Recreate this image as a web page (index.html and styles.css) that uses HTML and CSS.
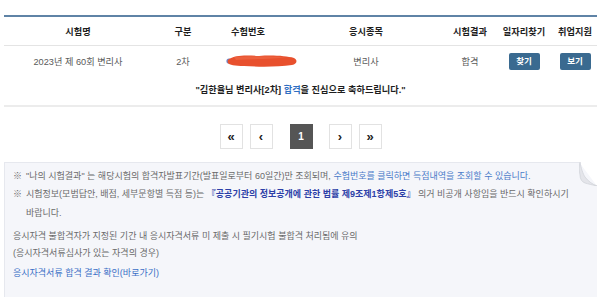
FILE: index.html
```html
<!DOCTYPE html>
<html lang="ko">
<head>
<meta charset="utf-8">
<title>나의 시험결과</title>
<link rel="stylesheet" href="styles.css">
</head>
<body>
<div class="wrap">
  <div class="tbl">
    <div class="row head">
      <div>시험명</div><div>구분</div><div>수험번호</div><div>응시종목</div><div>시험결과</div><div>일자리찾기</div><div class="last">취업지원</div>
    </div>
    <div class="row data">
      <div>2023년 제 60회 변리사</div>
      <div>2차</div>
      <div class="num">
        <svg class="redact" width="72" height="16" viewBox="0 0 72 16">
          <circle cx="3" cy="8" r="2.6" fill="#6d86c9"/>
          <path d="M3 6 C9 2 20 2 33 3 C47 2 60 3 68 5 C72 7 71 11 66 12 C52 14 33 14 18 13 C9 13 3 12 2 10 C1 8 2 7 3 6 Z" fill="#e8502d"/>
          <path d="M8 4 C20 3 40 3 60 4 C50 6 30 6 10 7 Z" fill="#ee6a48" opacity=".6"/>
        </svg>
      </div>
      <div>변리사</div>
      <div>합격</div>
      <div><span class="btn">찾기</span></div>
      <div class="last"><span class="btn">보기</span></div>
    </div>
  </div>
  <p class="msg">"김한율님 변리사[2차] <span class="pass">합격</span>을 진심으로 축하드립니다."</p>
  <nav class="pager">
    <span class="pg">&laquo;</span>
    <span class="pg">&lsaquo;</span>
    <span class="pg on">1</span>
    <span class="pg">&rsaquo;</span>
    <span class="pg">&raquo;</span>
  </nav>
  <div class="info">
    <svg class="curl" width="18" height="24" viewBox="0 0 18 24">
      <path d="M0 0 H18 V24 Z" fill="#ffffff"/>
      <path d="M1 0 C2 6 4 12 6 15 C9 19 13 22 18 24 C14 23 9 22 6 21 C3 20 1 17 1 13 C0 9 0 4 1 0 Z" fill="#e4e5ea" stroke="#cfd1d7" stroke-width=".7"/>
    </svg>
    <ul class="notes">
      <li><span class="mark">※</span><span class="txt">"나의 시험결과" 는 해당시험의 합격자발표기간(발표일로부터 60일간)만 조회되며, <span class="lnk">수험번호를 클릭하면 득점내역을 조회할 수 있습니다.</span></span></li>
      <li class="two"><span class="mark">※</span><span class="txt">시험정보(모범답안, 배점, 세부문항별 득점 등)는 <strong class="law">『공공기관의 정보공개에 관한 법률 제9조제1항제5호』</strong> 의거 비공개 사항임을 반드시 확인하시기<br>바랍니다.</span></li>
    </ul>
    <p class="warn">응시자격 불합격자가 지정된 기간 내 응시자격서류 미 제출 시 필기시험 불합격 처리됨에 유의<br>(응시자격서류심사가 있는 자격의 경우)</p>
    <p class="go"><a href="#">응시자격서류 합격 결과 확인(바로가기)</a></p>
  </div>
</div>
</body>
</html>
```
FILE: styles.css
```css
* { box-sizing: border-box; }
body {
  margin: 0;
  background: #fff;
  font-family: "Liberation Sans", "Noto Sans CJK KR", sans-serif;
  overflow: hidden;
}
.wrap { padding: 15px 0 0 4px; }

.tbl { border-top: 2px solid #5f83a6; }
.row {
  display: grid;
  grid-template-columns: 148px 62px 68px 168px 40px 68px 39px;
  align-items: center;
  text-align: center;
  font-size: 9.2px;
}
.row .last { padding-right: 5px; }
.head {
  height: 29px;
  border-bottom: 1px solid #e4e4e4;
  font-weight: bold;
  color: #1e1e1e;
}
.data { height: 30px; color: #5a5a5a; }
.num { text-align: left; padding-left: 12px; height: 16px; }
.redact { display: block; overflow: visible; }
.btn {
  display: inline-block;
  width: 31px;
  height: 17px;
  line-height: 17px;
  background: #3a6a90;
  color: #fff;
  font-weight: bold;
  border-radius: 2px;
  font-size: 8.5px;
}

.msg {
  margin: 0;
  height: 31px;
  line-height: 29px;
  text-align: center;
  font-size: 9.2px;
  font-weight: bold;
  color: #1e1e1e;
  border-bottom: 2px solid #ececec;
}
.pass { color: #2f6fc2; }

.pager {
  display: flex;
  justify-content: center;
  margin-top: 17px;
  height: 25px;
}
.pg {
  width: 23px;
  height: 25px;
  border: 1px solid #e2e2e2;
  background: #fff;
  display: flex;
  align-items: center;
  justify-content: center;
  font-size: 13px;
  font-weight: bold;
  color: #222;
  margin-left: 7px;
}
.pg:first-child { margin-left: 0; }
.pg.on {
  background: #555;
  border-color: #555;
  color: #fff;
  font-size: 10px;
  margin-left: 17px;
  margin-right: 9px;
}
.pg.on + .pg { margin-left: 7px; }

.info {
  position: relative;
  margin-top: 13px;
  height: 140px;
  background: #f5f6fa;
  border-top: 1px solid #e6e8ee;
  border-left: 1px solid #e6e8ee;
  padding: 4px 20px 0 8px;
  font-size: 9px;
  line-height: 18px;
  color: #6a6a6a;
}
.curl { position: absolute; top: -1px; right: 0; }
.notes { list-style: none; margin: 0; padding: 0; }
.notes li { display: flex; }
.notes .mark { flex: none; width: 13px; }
.notes .txt { white-space: nowrap; }
.notes li.two { line-height: 19px; }
.lnk { color: #4a7bc9; }
.law { color: #2c3fa8; }
.warn { margin: 5px 0 0; line-height: 17px; }
.go { margin: 2px 0 0; line-height: 18px; }
.go a { color: #3a6fc6; text-decoration: none; }
```
